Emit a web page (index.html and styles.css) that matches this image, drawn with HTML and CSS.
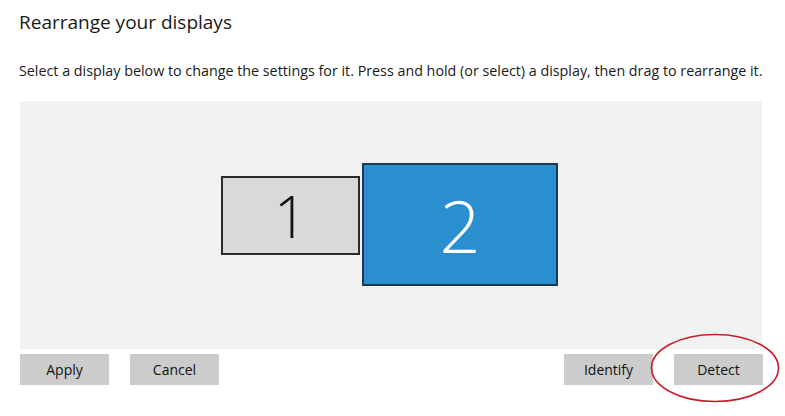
FILE: index.html
```html
<!DOCTYPE html>
<html lang="en">

<head>
    <meta charset="UTF-8">
    <meta name="viewport" content="width=device-width, initial-scale=1.0">
    <title>Display settings</title>
    <link rel="stylesheet" href="styles.css">
</head>

<body>

    <div class="page">
        <h1>Rearrange your displays</h1>
        <p class="desc">Select a display below to change the settings for it. Press and hold (or select) a display, then drag to rearrange it.</p>

        <div class="canvas">
            <div class="display display-1">1</div>
            <div class="display display-2 selected">2</div>
        </div>

        <div class="actions">
            <div class="group">
                <button type="button">Apply</button>
                <button type="button">Cancel</button>
            </div>
            <div class="group">
                <button type="button">Identify</button>
                <button type="button">Detect</button>
            </div>
        </div>

        <!-- hand-drawn highlight round the Detect button -->
        <svg class="circle" width="132" height="72" viewBox="0 0 132 72">
            <ellipse cx="66" cy="36" rx="63.5" ry="33.5" fill="none" stroke="#c81e2c" stroke-width="1.6" />
        </svg>
    </div>

</body>

</html>
```

FILE: styles.css
```css
* {
    margin: 0;
    padding: 0;
    box-sizing: border-box;
}

body {
    font-family: 'Open Sans', 'Noto Sans', sans-serif;
    background-color: #ffffff;
    color: #000;
}

.page {
    position: relative;
    width: 785px;
    height: 416px;
    padding: 8px 0 0 19px;
}

h1 {
    font-size: 19px;
    font-weight: 400;
    line-height: 28px;
    color: #1a1a1a;
}

.desc {
    font-size: 14.3px;
    line-height: 20px;
    margin-top: 25px;
    color: #1a1a1a;
    white-space: nowrap;
}

.canvas {
    position: relative;
    width: 742px;
    height: 248px;
    margin: 20px 0 0 1px;
    background-color: #f2f2f2;
}

.display {
    position: absolute;
    display: flex;
    align-items: center;
    justify-content: center;
    border: 2px solid #2b2b2b;
    font-weight: 300;
    line-height: 1;
}

.display-1 {
    left: 201px;
    top: 75px;
    width: 139px;
    height: 79px;
    background-color: #d9d9d9;
    color: #111;
    font-size: 58px;
}

.display-2 {
    left: 342px;
    top: 62px;
    width: 196px;
    height: 123px;
    background-color: #298fcf;
    border-color: #1d3b50;
    color: #fff;
    font-size: 72px;
}

.actions {
    display: flex;
    justify-content: space-between;
    width: 743px;
    margin: 5px 0 0 1px;
}

.group {
    display: flex;
    gap: 21px;
}

.actions button {
    width: 89px;
    height: 31px;
    border: none;
    background-color: #cccccc;
    font-family: inherit;
    font-size: 14px;
    color: #111;
}

.circle {
    position: absolute;
    left: 649px;
    top: 332px;
}
```
